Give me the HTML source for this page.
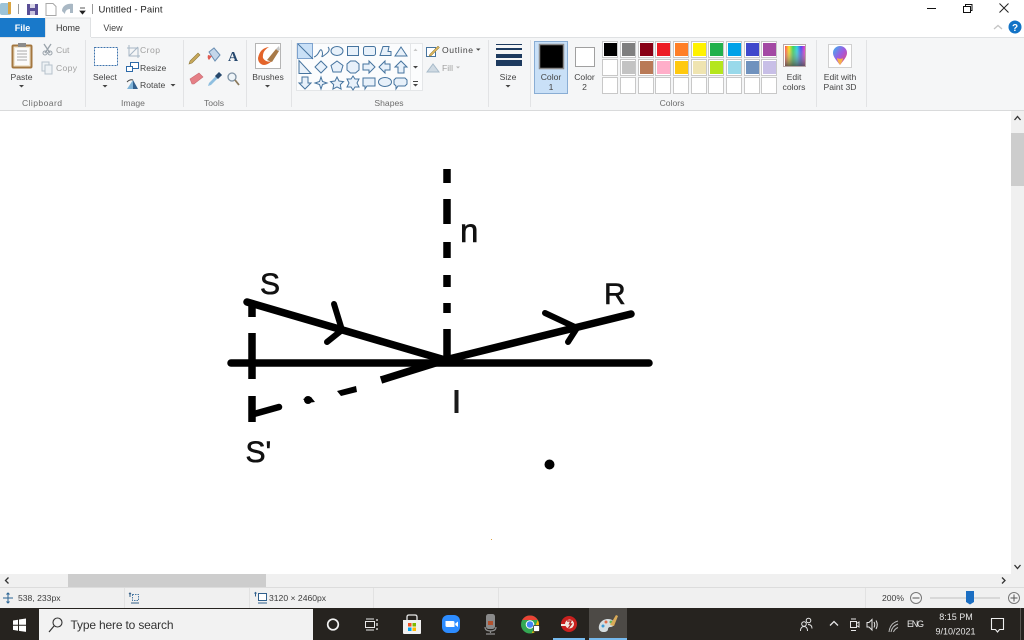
<!DOCTYPE html>
<html>
<head>
<meta charset="utf-8">
<title>Untitled - Paint</title>
<style>
html,body{margin:0;padding:0;width:1024px;height:640px;overflow:hidden;background:#fff}
svg{display:block;font-family:"Liberation Sans",sans-serif}
.r{font-size:8.6px;fill:#444}
.m{text-anchor:middle}
.g{font-size:8.6px;fill:#6d6d6d;text-anchor:middle}
.d{font-size:8.6px;fill:#a0a0a0}
.st{font-size:8.6px;fill:#3c3c3c}
.l{font-size:30px;fill:#111;stroke:#111;stroke-width:.6}
.b{fill:none;stroke:#000;stroke-width:7.500;stroke-linecap:round;stroke-linejoin:round}
.c{fill:none;stroke:#000;stroke-width:7.500}
.sw{fill:#fff;stroke:#c8c8c8}
</style>
</head>
<body>
<svg width="1024" height="640" viewBox="0 0 1024 640" xmlns="http://www.w3.org/2000/svg">
<rect width="1024" height="640" fill="#fff"/>

<!-- title bar -->
<g>
<rect x="0" y="3" width="11" height="12" rx="2" fill="#9cc3d8"/>
<rect x="8" y="2" width="3" height="12" fill="#d9a441"/>
<rect x="18" y="4" width="1" height="10" fill="#9a9a9a"/>
<rect x="27" y="4" width="11" height="11" fill="#5a4f96"/>
<rect x="30" y="4" width="5" height="4" fill="#d9d6e8"/>
<rect x="30" y="11" width="5" height="4" fill="#c9c4df"/>
<path d="M46 3.500h7l3 3v9h-10z" fill="#fff" stroke="#a8a8a8"/>
<path d="M62 11c0-5 5-8 11-7v9h-3v-4c-3 0-5 2-5 5z" fill="#a9b8c4"/>
<path d="M80 8h5M80 11h5l-2.500 3z" fill="#222" stroke="#222" stroke-width=".8"/>
<rect x="92" y="4" width="1" height="10" fill="#9a9a9a"/>
<text x="98.500" y="12.500" font-size="9.500" fill="#222" textLength="64">Untitled - Paint</text>
<rect x="927" y="8" width="9" height="1" fill="#111"/>
<rect x="963.500" y="6.500" width="7" height="6" fill="#fff" stroke="#111"/>
<path d="M965.500 6.500v-2h6.500v6h-1.500" fill="none" stroke="#111"/>
<path d="M999.500 3.500l9 9M1008.500 3.500l-9 9" stroke="#222" stroke-width="1" fill="none"/>
</g>

<!-- tabs row -->
<rect x="0" y="18" width="45" height="19" fill="#1979ca"/>
<text x="22.500" y="31" font-size="9" font-weight="bold" fill="#fff" text-anchor="middle">File</text>
<rect x="45" y="18" width="46" height="20" fill="#f5f6f7"/>
<path d="M45.500 37v-19h45v19" fill="none" stroke="#dfe1e3"/>
<text x="68" y="31" font-size="9" fill="#333" text-anchor="middle">Home</text>
<text x="113" y="31" font-size="9" fill="#444" text-anchor="middle">View</text>
<path d="M994 29l4-3.500 4 3.500" fill="none" stroke="#c4c4c4" stroke-width="1.300"/>
<circle cx="1015" cy="27" r="6.500" fill="#1273c6"/>
<text x="1015" y="31" font-size="10" font-weight="bold" fill="#fff" text-anchor="middle">?</text>

<!-- ribbon -->
<rect x="0" y="37" width="1024" height="73" fill="#f5f6f7"/>
<rect x="91" y="37" width="933" height="1" fill="#dfe1e3"/>
<rect x="0" y="37" width="45" height="1" fill="#dfe1e3"/>
<rect x="0" y="110" width="1024" height="1" fill="#d9dadb"/>
<g fill="#e2e3e5">
<rect x="85" y="40" width="1" height="67"/>
<rect x="183" y="40" width="1" height="67"/>
<rect x="246" y="40" width="1" height="67"/>
<rect x="291" y="40" width="1" height="67"/>
<rect x="488" y="40" width="1" height="67"/>
<rect x="530" y="40" width="1" height="67"/>
<rect x="816" y="40" width="1" height="67"/>
<rect x="866" y="40" width="1" height="67"/>
</g>

<!-- clipboard -->
<rect x="12.500" y="45.500" width="19" height="22" rx="1" fill="#f0e6d2" stroke="#a4773f" stroke-width="2"/>
<rect x="15" y="48" width="14" height="17" fill="#fbfbfb"/>
<path d="M17 51h10M17 54h10M17 57h10M17 60h10" stroke="#a9a9a9"/>
<rect x="18" y="43" width="8" height="4" fill="#8b8b8b"/>
<text class="r m" x="21.500" y="80">Paste</text>
<path d="M19 85h5l-2.500 2.500z" fill="#444"/>
<text class="g" x="42" y="106" textLength="40">Clipboard</text>
<path d="M44 44l6 9M51 44l-6 9" stroke="#9aa3ab" stroke-width="1.300"/>
<circle cx="45" cy="53" r="2" fill="none" stroke="#9aa3ab"/><circle cx="50" cy="53" r="2" fill="none" stroke="#9aa3ab"/>
<text class="d" x="56" y="53">Cut</text>
<rect x="42" y="62" width="7" height="9" fill="#eef2f5" stroke="#b6c2cc"/>
<rect x="45" y="65" width="7" height="9" fill="#eef2f5" stroke="#b6c2cc"/>
<text class="d" x="56" y="71" textLength="21">Copy</text>

<!-- image -->
<rect x="94.500" y="47.500" width="23" height="18" fill="#fff" stroke="#3f74ad" stroke-dasharray="2 1"/>
<text class="r m" x="105" y="80">Select</text>
<path d="M102.500 85h5l-2.500 2.500z" fill="#444"/>
<path d="M129 45v11h11M127 48h11v10" fill="none" stroke="#a7b7c6"/><path d="M129 56l9-9" stroke="#a7b7c6"/>
<text class="d" x="140" y="53" textLength="20">Crop</text>
<rect x="130.500" y="62.500" width="8" height="6" fill="#fff" stroke="#2c69a8"/>
<rect x="126.500" y="66.500" width="6" height="5" fill="#fff" stroke="#2c69a8"/>
<text class="r" x="140" y="71">Resize</text>
<path d="M127 89l6-9v9z" fill="#7fb3d8"/><path d="M133 80l5 9h-5z" fill="#33618f"/><path d="M127 82q3-3 6-2" stroke="#444" fill="none"/>
<text class="r" x="140" y="88">Rotate</text>
<path d="M170.500 84h5l-2.500 2.500z" fill="#444"/>
<text class="g" x="133" y="106">Image</text>

<!-- tools -->
<path d="M190 61l8-8 2 2-8 8-3 1z" fill="#c8a85a" stroke="#8f7a3c" stroke-width=".6"/>
<path d="M209 52l5-4 6 7-5 6z" fill="#c4d6ea" stroke="#6b8fb3"/><path d="M208 55q-1 3 1 5l3-4z" fill="#e05a50"/>
<text x="233" y="61" font-size="14" font-weight="bold" font-family="Liberation Serif" fill="#26486e" text-anchor="middle">A</text>
<path d="M190 79l9-6 4 4-9 7h-2z" fill="#e57f86" stroke="#c96b72" stroke-width=".6"/>
<path d="M209 83l8-8 2 2-8 8-3 1z" fill="#8fbfe0"/><path d="M216 76l3-3 2 2-3 3z" fill="#27486c" stroke="#27486c" stroke-width="1.500"/>
<circle cx="232" cy="77" r="4" fill="#eef4f8" stroke="#7f93a5" stroke-width="1.300"/><path d="M235 80l4 5" stroke="#8b7a5c" stroke-width="1.800"/>
<text class="g" x="214" y="106">Tools</text>

<!-- brushes -->
<rect x="255.500" y="43.500" width="25" height="25" fill="#fff" stroke="#b5b5b5"/>
<path d="M258 58q2-10 11-11-7 4-6 11 3 5 9 3-7 6-11 3-3-2-3-6z" fill="#e3642a"/>
<path d="M267 60l9-11 3 2-7 11z" fill="#a87a48"/><path d="M276 49l3-3 1 4-2 1z" fill="#c6c6c6"/>
<text class="r m" x="268" y="80">Brushes</text>
<path d="M265 85h5l-2.500 2.500z" fill="#444"/>

<!-- shapes gallery -->
<rect x="296.500" y="43.500" width="126" height="47" fill="#fbfcfd" stroke="#e4e6e8"/>
<rect x="297.500" y="43.500" width="15" height="15" fill="#c9e0f7" stroke="#7da2ce"/>
<g fill="#e8f1fa" stroke="#46749f" stroke-width="1">
<path d="M298 44l15 15" fill="none"/>
<path d="M314 57q3-1 5-5t3-1 0 5 4-2 2-7" fill="none"/>
<ellipse cx="337" cy="51" rx="6" ry="4.500"/>
<rect x="347.500" y="46.500" width="11" height="9"/>
<rect x="363.500" y="46.500" width="12" height="9" rx="2"/>
<path d="M380 55.500l3-9h6l-1 5h3v4z"/>
<path d="M395 56l6-9 6 9z"/>
<path d="M299 60.500v13h12z"/>
<path d="M321 61l6 6-6 6-6-6z"/>
<path d="M337 61l6 4.500-2 6.500h-8l-2-6.500z"/>
<path d="M350.500 61h5l3.500 3v6l-3.500 3h-5l-3.500-3v-6z"/>
<path d="M363 64h6v-3l6 6-6 6v-3h-6z"/>
<path d="M390 64h-5v-3l-6 6 6 6v-3h5z"/>
<path d="M401 61l6 6h-3v6h-6v-6h-3z"/>
<path d="M302 77h6v6h3l-6 6-6-6h3z"/>
<path d="M321 77l1.500 4.500 4.500 1.500-4.500 1.500-1.500 4.500-1.500-4.500-4.500-1.500 4.500-1.500z"/>
<path d="M337 77l2 4 4.500.6-3.200 3 .8 4.500-4.100-2.200-4.100 2.200.8-4.500-3.200-3 4.500-.6z"/>
<path d="M353 76l2 3h4l-2 4 2 4h-4l-2 3-2-3h-4l2-4-2-4h4z"/>
<path d="M363 78h12v8h-8l-2 3v-3h-2z"/>
<ellipse cx="385" cy="82" rx="6.500" ry="4.500"/>
<path d="M396 78h9l2 2v4l-2 2h-7l-2 3v-3l-2-2v-4z"/>
</g>
<path d="M413.500 51l2-2.500 2 2.500z" fill="#c8c8c8"/>
<path d="M413 66h5l-2.500 2.500z" fill="#444"/>
<path d="M413 81h5v1h-5zM413 84h5l-2.500 2.500z" fill="#444"/>
<rect x="410.500" y="43.500" width="12" height="47" fill="none" stroke="#e4e6e8"/>
<text class="g" x="389" y="106">Shapes</text>
<path d="M426.500 47.500h9v9h-9z" fill="#fff" stroke="#46749f"/>
<path d="M430 54l8-8 1.500 1.500-8 8-2.500.8z" fill="#d8b35c" stroke="#8b7a3c" stroke-width=".5"/>
<text class="r" x="442" y="53" textLength="31">Outline</text>
<path d="M476 48.500h4.500l-2.250 2.250z" fill="#444"/>
<path d="M427 72l6-8 6 8z" fill="#cfdae3" stroke="#a7bac9"/>
<text class="d" x="442" y="71">Fill</text>
<path d="M456 66.500h4l-2 2z" fill="#b5b5b5"/>

<!-- size -->
<g fill="#1d3a5f">
<rect x="496" y="44" width="26" height="1"/>
<rect x="496" y="48" width="26" height="2"/>
<rect x="496" y="54" width="26" height="4"/>
<rect x="496" y="60" width="26" height="6"/>
</g>
<text class="r m" x="508" y="80">Size</text>
<path d="M505.500 85h5l-2.500 2.500z" fill="#444"/>

<!-- colour 1/2 -->
<rect x="534.500" y="41.500" width="33" height="52" fill="#c9e0f7" stroke="#89add4"/>
<rect x="539.500" y="44.500" width="24" height="24" fill="#000" stroke="#8a8a8a" stroke-width="1.500"/>
<text class="r m" x="551" y="80">Color</text>
<text class="r m" x="551" y="90">1</text>
<rect x="575.500" y="47.500" width="19" height="19" fill="#fff" stroke="#a0a0a0"/>
<text class="r m" x="584.500" y="80">Color</text>
<text class="r m" x="584.500" y="90">2</text>

<!-- palette -->
<g class="sw" stroke-width="1">
<rect x="602.500" y="41.500" width="15" height="16"/><rect x="620.500" y="41.500" width="15" height="16"/><rect x="638.500" y="41.500" width="15" height="16"/><rect x="655.500" y="41.500" width="15" height="16"/><rect x="673.500" y="41.500" width="15" height="16"/><rect x="691.500" y="41.500" width="15" height="16"/><rect x="708.500" y="41.500" width="15" height="16"/><rect x="726.500" y="41.500" width="15" height="16"/><rect x="744.500" y="41.500" width="15" height="16"/><rect x="761.500" y="41.500" width="15" height="16"/>
<rect x="602.500" y="59.500" width="15" height="16"/><rect x="620.500" y="59.500" width="15" height="16"/><rect x="638.500" y="59.500" width="15" height="16"/><rect x="655.500" y="59.500" width="15" height="16"/><rect x="673.500" y="59.500" width="15" height="16"/><rect x="691.500" y="59.500" width="15" height="16"/><rect x="708.500" y="59.500" width="15" height="16"/><rect x="726.500" y="59.500" width="15" height="16"/><rect x="744.500" y="59.500" width="15" height="16"/><rect x="761.500" y="59.500" width="15" height="16"/>
<rect x="602.500" y="77.500" width="15" height="16"/><rect x="620.500" y="77.500" width="15" height="16"/><rect x="638.500" y="77.500" width="15" height="16"/><rect x="655.500" y="77.500" width="15" height="16"/><rect x="673.500" y="77.500" width="15" height="16"/><rect x="691.500" y="77.500" width="15" height="16"/><rect x="708.500" y="77.500" width="15" height="16"/><rect x="726.500" y="77.500" width="15" height="16"/><rect x="744.500" y="77.500" width="15" height="16"/><rect x="761.500" y="77.500" width="15" height="16"/>
</g>
<rect x="604" y="43" width="13" height="13" fill="#000"/><rect x="622" y="43" width="13" height="13" fill="#7f7f7f"/><rect x="640" y="43" width="13" height="13" fill="#880015"/><rect x="657" y="43" width="13" height="13" fill="#ed1c24"/><rect x="675" y="43" width="13" height="13" fill="#ff7f27"/><rect x="693" y="43" width="13" height="13" fill="#fff200"/><rect x="710" y="43" width="13" height="13" fill="#22b14c"/><rect x="728" y="43" width="13" height="13" fill="#00a2e8"/><rect x="746" y="43" width="13" height="13" fill="#3f48cc"/><rect x="763" y="43" width="13" height="13" fill="#a349a4"/>
<rect x="604" y="61" width="13" height="13" fill="#fff"/><rect x="622" y="61" width="13" height="13" fill="#c3c3c3"/><rect x="640" y="61" width="13" height="13" fill="#b97a57"/><rect x="657" y="61" width="13" height="13" fill="#ffaec9"/><rect x="675" y="61" width="13" height="13" fill="#ffc90e"/><rect x="693" y="61" width="13" height="13" fill="#efe4b0"/><rect x="710" y="61" width="13" height="13" fill="#b5e61d"/><rect x="728" y="61" width="13" height="13" fill="#99d9ea"/><rect x="746" y="61" width="13" height="13" fill="#7092be"/><rect x="763" y="61" width="13" height="13" fill="#c8bfe7"/>
<text class="g" x="672" y="106">Colors</text>

<!-- edit colours -->
<defs>
<linearGradient id="rb" x1="0" x2="1" y1="0" y2="0">
<stop offset="0" stop-color="#f33"/><stop offset=".2" stop-color="#fd0"/><stop offset=".4" stop-color="#2c4"/><stop offset=".6" stop-color="#1cd"/><stop offset=".8" stop-color="#33e"/><stop offset="1" stop-color="#e2b"/>
</linearGradient>
<linearGradient id="fd" x1="0" x2="0" y1="0" y2="1">
<stop offset="0" stop-color="#fff" stop-opacity=".1"/><stop offset="1" stop-color="#555" stop-opacity=".85"/>
</linearGradient>
<linearGradient id="p3" x1="0" x2="1" y1="0" y2="1">
<stop offset="0" stop-color="#37b6f0"/><stop offset=".5" stop-color="#a05ae0"/><stop offset="1" stop-color="#f0486a"/>
</linearGradient>
</defs>
<rect x="783.500" y="44.500" width="22" height="22" fill="#fff" stroke="#b8a8a8"/>
<rect x="785" y="46" width="20" height="20" fill="url(#rb)"/>
<rect x="785" y="46" width="20" height="20" fill="url(#fd)"/>
<text class="r m" x="794" y="80">Edit</text>
<text class="r m" x="794" y="90">colors</text>
<rect x="828.500" y="44.500" width="23" height="23" fill="#fff" stroke="#d0d0d0"/>
<path d="M840 65c-3-4-7-8-7-12a7 7 0 0 1 14 0c0 4-4 8-7 12z" fill="url(#p3)"/>
<path d="M840 65c-2-3-3-5-3-7 2 1 5 1 6 0 0 2-1 4-3 7z" fill="#f6b24a"/>
<text class="r m" x="840" y="80">Edit with</text>
<text class="r m" x="840" y="90">Paint 3D</text>

<!-- drawing -->
<g>
<path class="c" d="M447 169v14M447 199v25M447 242v16M447 275v12M447 303v10M447 329v33"/>
<path class="c" d="M252 303v14M252 333v46M252 396v26"/>
<path class="b" d="M231 363H649"/>
<path class="b" d="M247 302L445 360L631 314"/>
<path class="b" d="M445 360L381 380" style="stroke-linecap:butt"/>
<path class="b" d="M334 304L342 330L327 342" style="stroke-width:6"/>
<path class="b" d="M545 313L577 328L568 342" style="stroke-width:6"/>
<path d="M337 391l19-5 1 6-16 4z" fill="#000"/>
<circle cx="308" cy="400" r="4" fill="#000"/><path d="M303 399l8-2 4 5-8 1z" fill="#000"/>
<path class="b" d="M254 414L279 407" style="stroke-width:6.500"/>
<circle cx="549.500" cy="464.500" r="5" fill="#000"/>
<rect x="491" y="539" width="1" height="1" fill="#e0a040"/>
<text class="l" x="260" y="294">S</text>
<text class="l" x="460" y="242" style="font-size:33px">n</text>
<text class="l" x="604" y="304">R</text>
<rect x="454.500" y="390" width="4" height="23" fill="#1a1a1a"/>
<text class="l" x="245.500" y="462">S'</text>
</g>

<!-- scrollbars -->
<rect x="1011" y="111" width="13" height="463" fill="#f0f0f0"/>
<rect x="1011" y="133" width="13" height="53" fill="#cdcdcd"/>
<path d="M1014.500 120l3-3.500 3 3.500" fill="none" stroke="#333" stroke-width="1.300"/>
<path d="M1014.500 565l3 3.500 3-3.500" fill="none" stroke="#333" stroke-width="1.300"/>
<rect x="0" y="574" width="1024" height="13" fill="#f0f0f0"/>
<rect x="68" y="574" width="198" height="13" fill="#cdcdcd"/>
<path d="M8.500 577.500l-3 3 3 3" fill="none" stroke="#333" stroke-width="1.300"/>
<path d="M1002 577.500l3 3-3 3" fill="none" stroke="#333" stroke-width="1.300"/>

<!-- status bar -->
<rect x="0" y="587" width="1024" height="21" fill="#f0f0f0"/>
<rect x="0" y="587" width="1024" height="1" fill="#dcdcdc"/>
<g fill="#e2e2e2">
<rect x="124" y="588" width="1" height="20"/><rect x="249" y="588" width="1" height="20"/><rect x="373" y="588" width="1" height="20"/><rect x="498" y="588" width="1" height="20"/><rect x="865" y="588" width="1" height="20"/>
</g>
<path d="M8 593v10M3 598h10M6.500 594.500l1.500-1.500 1.500 1.500M6.500 601.500l1.500 1.500 1.500-1.500" fill="none" stroke="#2a6494"/>
<text class="st" x="18" y="601">538, 233px</text>
<rect x="132.500" y="594.500" width="6" height="6" fill="none" stroke="#4b7ba5" stroke-dasharray="1.500 1"/>
<path d="M130 593v4M129 594l1-1 1 1M131 603h8" fill="none" stroke="#355f86"/>
<rect x="258.500" y="593.500" width="8" height="7" fill="#fff" stroke="#2f5f8c"/>
<path d="M255.500 592.500v4M254.500 593.500l1-1 1 1M258 603h9" fill="none" stroke="#2f5f8c"/>
<text class="st" x="269" y="601">3120 × 2460px</text>
<text class="st" x="882" y="601">200%</text>
<circle cx="916" cy="598" r="5.500" fill="#f4f4f4" stroke="#777"/>
<path d="M912.500 598h7" stroke="#555"/>
<rect x="930" y="597" width="70" height="2" fill="#d8d8d8"/>
<path d="M966 591h8v11l-4 2.500-4-2.500z" fill="#1b6ec2"/>
<circle cx="1014" cy="598" r="5.500" fill="#f4f4f4" stroke="#777"/>
<path d="M1010.500 598h7M1014 594.500v7" stroke="#555"/>

<!-- taskbar -->
<rect x="0" y="608" width="1024" height="32" fill="#26231f"/>
<g fill="#fff">
<path d="M13 620.500l5-.8v5h-5zM19 619.500l7-1v6.200h-7zM13 625.700h5v5l-5-.8zM19 625.700h7v6.200l-7-1z"/>
</g>
<rect x="39" y="609" width="274" height="31" fill="#f2f2f2"/>
<circle cx="57.500" cy="622.500" r="4.500" fill="none" stroke="#333" stroke-width="1.100"/>
<path d="M54 626l-5 6" stroke="#333" stroke-width="1.200"/>
<text x="70.500" y="629" font-size="12" fill="#333" textLength="103">Type here to search</text>
<circle cx="333" cy="624.500" r="5.300" fill="none" stroke="#f2f2f2" stroke-width="1.700"/>
<path d="M366 619h8M366 630h8" stroke="#e8e8e8"/>
<rect x="365.500" y="621.500" width="9" height="6" fill="none" stroke="#e8e8e8"/>
<path d="M377 619v2M377 623v3M377 628v2" stroke="#e8e8e8" stroke-width="1.300"/>
<path d="M403 620h18v13a1 1 0 0 1-1 1h-16a1 1 0 0 1-1-1z" fill="#f0f0f0"/>
<path d="M407 620v-3q0-2 2-2h6q2 0 2 2v3" fill="none" stroke="#e8e8e8" stroke-width="1.300"/>
<rect x="408" y="623" width="3.500" height="3.500" fill="#f25022"/><rect x="412.500" y="623" width="3.500" height="3.500" fill="#7fba00"/><rect x="408" y="627.500" width="3.500" height="3.500" fill="#00a4ef"/><rect x="412.500" y="627.500" width="3.500" height="3.500" fill="#ffb900"/>
<rect x="442" y="615" width="18" height="18" rx="6" fill="#2d8cff"/>
<path d="M445.500 621h7.500q1.500 0 1.500 1.500v4.500h-7.500q-1.500 0-1.500-1.500zM455.300 623.500l2.700-2v5.500l-2.700-2z" fill="#fff"/>
<rect x="486" y="614" width="9" height="15" rx="2.500" fill="#8a8a8a"/>
<rect x="488" y="621" width="5" height="4" fill="#b3522f"/>
<path d="M485 627q0 4 5.500 4t5.500-4M490.500 631v2M486 634h9" fill="none" stroke="#8f8f8f" stroke-width="1.200"/>
<circle cx="530" cy="624.500" r="9" fill="#34a853"/>
<path d="M522.200 620a9 9 0 0 1 15.600 0h-7.800z" fill="#ea4335"/>
<path d="M537.800 620a9 9 0 0 1-6 13.300l3-6z" fill="#fbbc05"/>
<circle cx="530" cy="624.500" r="3.800" fill="#4285f4" stroke="#fff"/>
<rect x="533.500" y="625.500" width="6" height="6" rx="1" fill="#fff" stroke="#26231f" stroke-width=".7"/>
<circle cx="569" cy="624" r="8" fill="#c9201e"/>
<circle cx="569.500" cy="624" r="4.500" fill="#f2e9e0"/>
<path d="M561 625h6" stroke="#f2e9e0" stroke-width="2"/>
<path d="M567 621h4l-1.500 3h2l-3 4" fill="none" stroke="#b8201c" stroke-width="1.300"/>
<rect x="553" y="638" width="32" height="2" fill="#76b9ed"/>
<rect x="589" y="608" width="38" height="32" fill="#4d4a46"/>
<rect x="589" y="638" width="38" height="2" fill="#76b9ed"/>
<path d="M599 629c-1-5 3-10 9-10 4 0 6 2 6 5 0 2-2 3-4 3-1 0-2 1-2 2 0 2-2 3-4 3-3 0-4-1-5-3z" fill="#d5dde0"/>
<circle cx="603" cy="626" r="1.500" fill="#3b9bd6"/><circle cx="606" cy="622" r="1.500" fill="#e36f4b"/><circle cx="611" cy="622" r="1.500" fill="#64b45a"/>
<path d="M610 625l6-10 2 1-4 10z" fill="#d9aa58"/>

<!-- tray -->
<g fill="none" stroke="#e6e6e6" stroke-width="1">
<circle cx="808.500" cy="620.500" r="2.300"/>
<circle cx="804" cy="624" r="2.300"/>
<path d="M800.500 631c0-3 1.500-4.500 3.500-4.500s3.500 1.500 3.500 4.500M808 624.500c2 0 4 1 4 4"/>
<path d="M830 625.500l4-4 4 4" stroke-width="1.300"/>
<rect x="850.500" y="621.500" width="6" height="6"/>
<path d="M856.500 623.500l2.500-1.500v5l-2.500-1.500zM851 619h5M851 630.500h5"/>
<path d="M867 622.500h2l3-3v10.500l-3-3h-2z"/>
<path d="M874 622q1.500 2.700 0 5.500M876 620.500q2.500 4.200 0 8.500"/>
<path d="M889 632q1-9 9-11M891 632q1-6 7-8M893.500 632q1-3 4.500-4.500" stroke="#bdbdbd"/>
</g>
<text x="915.500" y="627" font-size="9" fill="#e8e8e8" text-anchor="middle" textLength="17">ENG</text>
<text x="956" y="620" font-size="9" fill="#e8e8e8" text-anchor="middle">8:15 PM</text>
<text x="955.500" y="634.500" font-size="9" fill="#e8e8e8" text-anchor="middle">9/10/2021</text>
<path d="M991.500 618.500h12v11h-4l-2 2.500-2-2.500h-4z" fill="none" stroke="#efefef" stroke-width="1.100"/>
<rect x="1020" y="608" width="1" height="32" fill="#5a5753"/>
</svg>
</body>
</html>
